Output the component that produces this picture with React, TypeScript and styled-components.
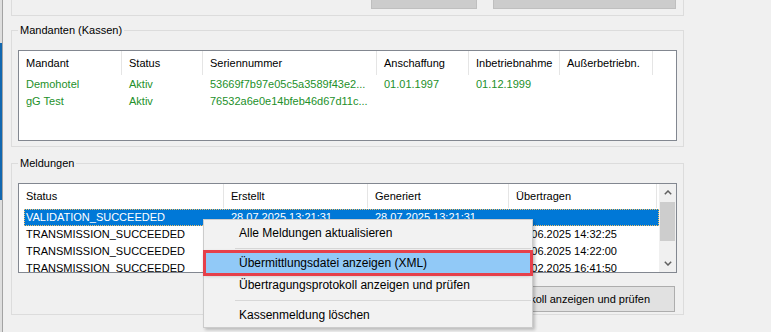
import styled, { createGlobalStyle, css } from 'styled-components';

const GlobalStyle = createGlobalStyle`
  html, body {
    margin: 0;
    padding: 0;
    background: #f0f0f0;
  }
  body {
    font-family: "Liberation Sans", Arial, sans-serif;
    font-size: 11px;
    color: #000;
    overflow: hidden;
  }
`;

const WindowStyled = styled.div`
  position: relative;
  display: flex;
  width: 771px;
  height: 332px;
  overflow: hidden;
  background: #f0f0f0;
`;

const EdgeStrip = styled.div`
  width: 3px;
  flex-shrink: 0;
  display: flex;
  flex-direction: column;
  box-sizing: border-box;
  background: #dedede;
  border-right: 1px solid #a3a3a3;
`;

const EdgeBlue = styled.div`
  margin-top: 43px;
  height: 157px;
  background: #1268b0;
`;

const Main = styled.div`
  display: flex;
  flex-direction: column;
  padding-left: 8px;
`;

const TopGroup = styled.div`
  width: 673px;
  height: 40px;
  margin-top: -24px;
  box-sizing: border-box;
  border: 1px solid #dcdcdc;
  border-top: none;
  display: flex;
  justify-content: flex-end;
  align-items: flex-end;
  gap: 16px;
  padding: 0 7px 6px 0;
`;

const DisabledButton = styled.button<{ $w: number }>`
  width: ${({ $w }) => $w}px;
  height: 23px;
  box-sizing: border-box;
  background: #cccccc;
  border: 1px solid #bfbfbf;
  color: #8a8a8a;
  font: inherit;
  padding: 0 0 7px;
`;

const GroupBox = styled.fieldset<{ $top: number; $bottom: number }>`
  width: 673px;
  min-width: 0;
  box-sizing: border-box;
  margin: ${({ $top }) => $top}px 0 0;
  border: 1px solid #dcdcdc;
  padding: 13px 6px ${({ $bottom }) => $bottom}px;
  legend {
    padding: 0 2px;
    line-height: 14px;
    font-size: 11px;
  }
`;

const ListFrame = styled.div<{ $h: number }>`
  display: flex;
  height: ${({ $h }) => $h}px;
  box-sizing: border-box;
  border: 1px solid #828790;
  background: #fff;
  overflow: hidden;
`;

const ListBody = styled.div`
  flex: 1;
  min-width: 0;
  overflow: hidden;
`;

const HeaderRow = styled.div<{ $cols: string }>`
  display: grid;
  grid-template-columns: ${({ $cols }) => $cols};
  height: 24px;
`;

const HeaderCell = styled.div`
  display: flex;
  align-items: center;
  padding-left: 7px;
  border-right: 1px solid #e5e5e5;
  white-space: nowrap;
  overflow: hidden;
`;

const Rows = styled.div`
  padding-top: 1px;
`;

const DataRow = styled.div<{ $cols: string; $green?: boolean; $selected?: boolean }>`
  display: grid;
  grid-template-columns: ${({ $cols }) => $cols};
  height: 17px;
  line-height: 17px;
  margin-left: 5px;
  color: ${({ $green }) => ($green ? '#23902a' : '#000')};
  ${({ $selected }) =>
    $selected &&
    css`
      background: #0078d7;
      color: #fff;
      outline: 1px dotted #f3c26a;
      outline-offset: -1px;
    `}
`;

const Cell = styled.div`
  padding-left: 7px;
  white-space: nowrap;
  overflow: hidden;
  &:first-child {
    padding-left: 2px;
  }
`;

const ScrollBar = styled.div`
  width: 17px;
  flex-shrink: 0;
  display: flex;
  flex-direction: column;
  background: #f0f0f0;
`;

const ScrollArrow = styled.div`
  height: 17px;
  display: flex;
  align-items: center;
  justify-content: center;
`;

const ScrollThumb = styled.div`
  height: 39px;
  margin: 1px 1px 0;
  background: #cdcdcd;
`;

const ScrollTrack = styled.div`
  flex: 1;
`;

const ButtonRow = styled.div`
  display: flex;
  justify-content: flex-end;
  margin-top: 13px;
  padding-right: 2px;
`;

const PushButton = styled.button`
  height: 26px;
  box-sizing: border-box;
  padding: 0 24px;
  background: #e1e1e1;
  border: 1px solid #adadad;
  font: inherit;
  color: #000;
`;

const ContextMenu = styled.div`
  position: absolute;
  left: 203px;
  top: 219px;
  width: 330px;
  box-sizing: border-box;
  padding: 2px 1px 1px;
  background: #f2f2f2;
  border: 1px solid #cccccc;
  box-shadow: 2px 2px 3px rgba(0, 0, 0, 0.22);
  font-size: 12px;
`;

const MenuItem = styled.div<{ $active?: boolean }>`
  height: 22px;
  display: flex;
  align-items: center;
  padding-left: 34px;
  white-space: nowrap;
  ${({ $active }) =>
    $active &&
    css`
      background: #91c9f7;
      outline: 3px solid #e6404a;
      outline-offset: -1px;
      box-shadow: 0 1px 4px rgba(0, 0, 0, 0.35);
    `}
`;

const MenuSeparator = styled.div`
  height: 8px;
  box-sizing: border-box;
  padding: 4px 0 0 30px;
  &::after {
    content: '';
    display: block;
    height: 1px;
    background: #d7d7d7;
  }
`;

const Chevron = ({ up }: { up?: boolean }) => (
  <svg width="8" height="5" viewBox="0 0 8 5">
    <path
      d={up ? 'M0.8 4.2 L4 1 L7.2 4.2' : 'M0.8 0.8 L4 4 L7.2 0.8'}
      fill="none"
      stroke="#606060"
      strokeWidth="1.5"
    />
  </svg>
);

const mandantHead = '103px 81px 174px 92px 91px 93px';
const mandantRow = '98px 81px 174px 92px 91px';
const meldHead = '205px 144px 141px 148px';
const meldRow = '200px 144px 141px 143px';

const mandanten = [
  ['Demohotel', 'Aktiv', '53669f7b97e05c5a3589f43e2...', '01.01.1997', '01.12.1999'],
  ['gG Test', 'Aktiv', '76532a6e0e14bfeb46d67d11c...', '', ''],
];

const meldungen = [
  ['VALIDATION_SUCCEEDED', '28.07.2025 13:21:31', '28.07.2025 13:21:31', ''],
  ['TRANSMISSION_SUCCEEDED', '16.06.2025 14:32:20', '16.06.2025 14:32:21', '16.06.2025 14:32:25'],
  ['TRANSMISSION_SUCCEEDED', '16.06.2025 14:21:55', '16.06.2025 14:21:56', '16.06.2025 14:22:00'],
  ['TRANSMISSION_SUCCEEDED', '13.02.2025 16:41:44', '13.02.2025 16:41:45', '13.02.2025 16:41:50'],
];

const App = () => {
  return (
    <>
      <GlobalStyle />
      <WindowStyled>
        <EdgeStrip>
          <EdgeBlue />
        </EdgeStrip>
        <Main>
          <TopGroup>
            <DisabledButton $w={106}>Fehlende Daten</DisabledButton>
            <DisabledButton $w={183}>Seriennummer aktualisieren</DisabledButton>
          </TopGroup>

          <GroupBox $top={7} $bottom={5}>
            <legend>Mandanten (Kassen)</legend>
            <ListFrame $h={91}>
              <ListBody>
                <HeaderRow $cols={mandantHead}>
                  <HeaderCell>Mandant</HeaderCell>
                  <HeaderCell>Status</HeaderCell>
                  <HeaderCell>Seriennummer</HeaderCell>
                  <HeaderCell>Anschaffung</HeaderCell>
                  <HeaderCell>Inbetriebnahme</HeaderCell>
                  <HeaderCell>Außerbetriebn.</HeaderCell>
                </HeaderRow>
                <Rows>
                  {mandanten.map((row, i) => (
                    <DataRow key={i} $cols={mandantRow} $green>
                      {row.map((v, j) => (
                        <Cell key={j}>{v}</Cell>
                      ))}
                    </DataRow>
                  ))}
                </Rows>
              </ListBody>
            </ListFrame>
          </GroupBox>

          <GroupBox $top={9} $bottom={2}>
            <legend>Meldungen</legend>
            <ListFrame $h={90}>
              <ListBody>
                <HeaderRow $cols={meldHead}>
                  <HeaderCell>Status</HeaderCell>
                  <HeaderCell>Erstellt</HeaderCell>
                  <HeaderCell>Generiert</HeaderCell>
                  <HeaderCell>Übertragen</HeaderCell>
                </HeaderRow>
                <Rows>
                  {meldungen.map((row, i) => (
                    <DataRow key={i} $cols={meldRow} $selected={i === 0}>
                      {row.map((v, j) => (
                        <Cell key={j}>{v}</Cell>
                      ))}
                    </DataRow>
                  ))}
                </Rows>
              </ListBody>
              <ScrollBar>
                <ScrollArrow>
                  <Chevron up />
                </ScrollArrow>
                <ScrollThumb />
                <ScrollTrack />
                <ScrollArrow>
                  <Chevron />
                </ScrollArrow>
              </ScrollBar>
            </ListFrame>
            <ButtonRow>
              <PushButton>Übertragungsprotokoll anzeigen und prüfen</PushButton>
            </ButtonRow>
          </GroupBox>
        </Main>

        <ContextMenu>
          <MenuItem>Alle Meldungen aktualisieren</MenuItem>
          <MenuSeparator />
          <MenuItem $active>Übermittlungsdatei anzeigen (XML)</MenuItem>
          <MenuItem>Übertragungsprotokoll anzeigen und prüfen</MenuItem>
          <MenuSeparator />
          <MenuItem>Kassenmeldung löschen</MenuItem>
        </ContextMenu>
      </WindowStyled>
    </>
  );
};

export default App;
